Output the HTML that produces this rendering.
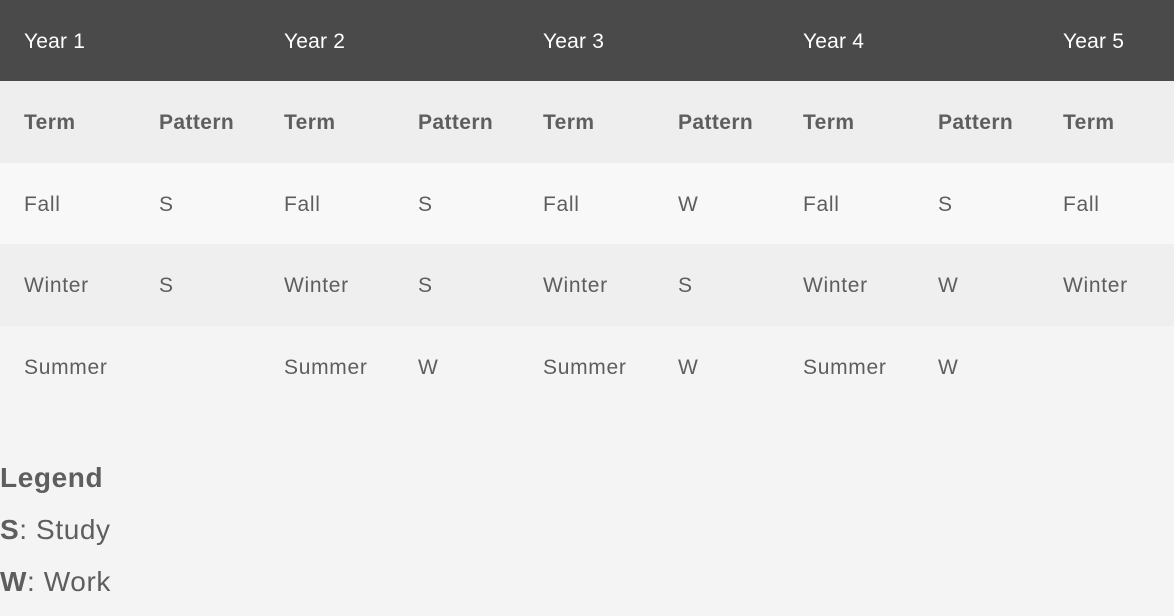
<!DOCTYPE html>
<html><head><style>
body{margin:0;width:1174px;height:616px;background:#f4f4f4;font-family:"Liberation Sans",sans-serif;color:#5e5e5e;overflow:hidden;position:relative}
.r{position:absolute;left:0;width:1174px;height:82px}
.c{position:absolute;font-size:21px;line-height:82px;white-space:nowrap;letter-spacing:0.7px;margin-top:1px}
.h{color:#fff;font-weight:normal;letter-spacing:0.2px}
.b{font-weight:bold;letter-spacing:0.4px}
.l{position:absolute;left:0;font-size:28px;white-space:nowrap;letter-spacing:0.6px}
</style></head><body>
<div class="r" style="top:0;height:81px;background:#4a4a4a"></div>
<div class="r" style="top:81px;background:#eeeeee"></div>
<div class="r" style="top:163px;background:#f8f8f8"></div>
<div class="r" style="top:244px;background:#efefef"></div>
<div class="c h" style="left:24px;top:0;line-height:81px">Year 1</div>
<div class="c h" style="left:284px;top:0;line-height:81px">Year 2</div>
<div class="c h" style="left:543px;top:0;line-height:81px">Year 3</div>
<div class="c h" style="left:803px;top:0;line-height:81px">Year 4</div>
<div class="c h" style="left:1063px;top:0;line-height:81px">Year 5</div>

<div class="c b" style="left:24px;top:81px">Term</div>
<div class="c b" style="left:159px;top:81px">Pattern</div>
<div class="c b" style="left:284px;top:81px">Term</div>
<div class="c b" style="left:418px;top:81px">Pattern</div>
<div class="c b" style="left:543px;top:81px">Term</div>
<div class="c b" style="left:678px;top:81px">Pattern</div>
<div class="c b" style="left:803px;top:81px">Term</div>
<div class="c b" style="left:938px;top:81px">Pattern</div>
<div class="c b" style="left:1063px;top:81px">Term</div>

<div class="c" style="left:24px;top:163px">Fall</div>
<div class="c" style="left:159px;top:163px">S</div>
<div class="c" style="left:284px;top:163px">Fall</div>
<div class="c" style="left:418px;top:163px">S</div>
<div class="c" style="left:543px;top:163px">Fall</div>
<div class="c" style="left:678px;top:163px">W</div>
<div class="c" style="left:803px;top:163px">Fall</div>
<div class="c" style="left:938px;top:163px">S</div>
<div class="c" style="left:1063px;top:163px">Fall</div>

<div class="c" style="left:24px;top:244px">Winter</div>
<div class="c" style="left:159px;top:244px">S</div>
<div class="c" style="left:284px;top:244px">Winter</div>
<div class="c" style="left:418px;top:244px">S</div>
<div class="c" style="left:543px;top:244px">Winter</div>
<div class="c" style="left:678px;top:244px">S</div>
<div class="c" style="left:803px;top:244px">Winter</div>
<div class="c" style="left:938px;top:244px">W</div>
<div class="c" style="left:1063px;top:244px">Winter</div>

<div class="c" style="left:24px;top:326px">Summer</div>
<div class="c" style="left:284px;top:326px">Summer</div>
<div class="c" style="left:418px;top:326px">W</div>
<div class="c" style="left:543px;top:326px">Summer</div>
<div class="c" style="left:678px;top:326px">W</div>
<div class="c" style="left:803px;top:326px">Summer</div>
<div class="c" style="left:938px;top:326px">W</div>

<div class="l b" style="top:462px">Legend</div>
<div class="l" style="top:514px"><b>S</b>: Study</div>
<div class="l" style="top:566px"><b>W</b>: Work</div>
</body></html>
